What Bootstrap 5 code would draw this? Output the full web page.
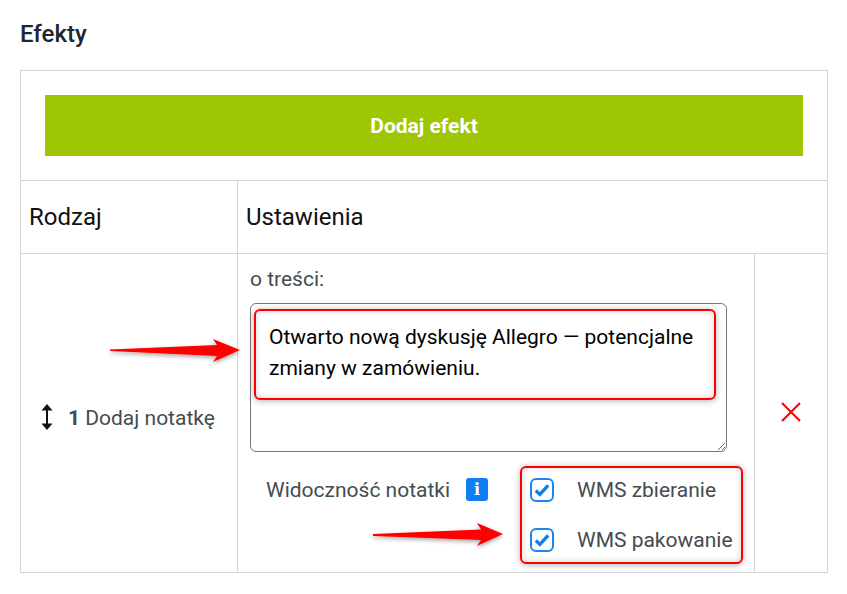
<!DOCTYPE html>
<html lang="pl">
<head>
  <meta charset="UTF-8" />
  <title>Efekty</title>
  <link href="https://cdn.jsdelivr.net/npm/bootstrap@5.3.0/dist/css/bootstrap.min.css" rel="stylesheet" />
  <style>
    body { font-family: Roboto, "Liberation Sans", sans-serif; background: #fff; color: #454b50; }
    .page-wrap { position: relative; width: 847px; height: 594px; padding: 20px; overflow: hidden; }
    .fx-title { font-size: 24px; font-weight: 500; line-height: 28px; margin: 0 0 22px; color: #1d2731; }
    .fx-table { width: 807px; table-layout: fixed; border-collapse: collapse; margin: 0; }
    .fx-table td, .fx-table th { border: 1px solid #d5d5d5; padding: 0; }
    .add-cell { height: 110px; padding: 24px !important; }
    .btn-add { display: block; width: 100%; height: 61px; padding-top: 8px; background: #9fc603; color: #fff; border: 0; border-radius: 0; font-size: 21px; font-weight: 700; }
    .btn-add:hover { background: #9fc603; color: #fff; }
    .head-cell { height: 73px; font-size: 24px; font-weight: 400; color: #111; padding-left: 8px !important; vertical-align: middle; }
    .name-cell { font-size: 21px; vertical-align: middle; }
    .name-inner { padding: 12px 0 0 15px; gap: 10px; }
    .sort-icon { margin-top: -5px; }
    .settings-cell { height: 319px; padding: 12px 27px 0 12px !important; vertical-align: top; }
    .field-label { font-size: 21px; line-height: 26px; margin-bottom: 11px; }
    .note-area { display: block; width: 477px; height: 149px; border: 1px solid #777; border-radius: 6px; padding: 18px 18px; font-size: 21px; line-height: 31px; color: #000; box-shadow: none; }
    .note-area:focus { border-color: #777; box-shadow: none; }
    .vis-row { padding: 26px 0 0 16px; font-size: 21px; }
    .vis-row > * { flex: none; }
    .vis-label { width: 200px; line-height: 24px; white-space: nowrap; }
    .info-badge { width: 22px; height: 23px; border-radius: 3px; background: #0d7ff0; color: #fff; font: 700 16px/23px "DejaVu Serif", serif; text-align: center; }
    .vis-options { margin-left: 42px; gap: 26px; }
    .vis-option { height: 24px; line-height: 24px; white-space: nowrap; gap: 23px; }
    .vis-option .form-check-input { width: 24px; height: 24px; margin: 0; border: 2px solid #1a86f0; border-radius: 6px; background-color: #fff; background-size: 18px; background-image: url("data:image/svg+xml,%3Csvg xmlns='http://www.w3.org/2000/svg' viewBox='0 0 16 16'%3E%3Cpath fill='none' stroke='%230d7ff0' stroke-width='3' d='M2.500 8.500l3.600 3.400 7.400-8'/%3E%3C/svg%3E"); }
    .del-cell { text-align: center; vertical-align: middle; }
    .del-cell svg { display: block; margin: -3px auto 0; }
    .red-box { position: absolute; border: 2px solid #f00; border-radius: 6px; box-shadow: 0 1px 6px rgba(0,0,0,.3), inset 0 0 6px rgba(0,0,0,.18); pointer-events: none; }
    .box-text { left: 254px; top: 309px; width: 462px; height: 91px; }
    .box-checks { left: 520px; top: 466px; width: 223px; height: 98px; }
    .arrow-layer { position: absolute; left: 0; top: 0; pointer-events: none; }
  </style>
</head>
<body>

<div class="page-wrap">
  <h2 class="fx-title">Efekty</h2>

  <table class="fx-table">
    <colgroup>
      <col style="width: 217px" />
      <col style="width: 517px" />
      <col style="width: 73px" />
    </colgroup>
    <tr>
      <td colspan="3" class="add-cell"><button type="button" class="btn btn-add">Dodaj efekt</button></td>
    </tr>
    <tr>
      <th class="head-cell">Rodzaj</th>
      <th class="head-cell" colspan="2">Ustawienia</th>
    </tr>
    <tr>
      <td class="name-cell">
        <div class="name-inner d-flex align-items-center">
          <svg class="sort-icon" width="22" height="28" viewBox="0 0 22 28">
            <path d="M11 3v22" stroke="#111" stroke-width="2" />
            <path d="M11 1l5.500 6.500h-11zM11 27l-5.500-6.500h11z" fill="#111" />
          </svg>
          <span><b>1</b> Dodaj notatkę</span>
        </div>
      </td>
      <td class="settings-cell">
        <div class="field-label">o treści:</div>
        <textarea class="form-control note-area" rows="3">Otwarto nową dyskusję Allegro — potencjalne zmiany w zamówieniu.</textarea>
        <div class="vis-row d-flex align-items-start">
          <div class="vis-label">Widoczność notatki</div>
          <div class="info-badge">i</div>
          <div class="vis-options d-flex flex-column">
            <label class="vis-option d-flex align-items-center"><input class="form-check-input" type="checkbox" checked /><span>WMS zbieranie</span></label>
            <label class="vis-option d-flex align-items-center"><input class="form-check-input" type="checkbox" checked /><span>WMS pakowanie</span></label>
          </div>
        </div>
      </td>
      <td class="del-cell">
        <svg width="20" height="20" viewBox="0 0 20 20"><path d="M1 1l18 18M19 1L1 19" stroke="#f00" stroke-width="2" fill="none" /></svg>
      </td>
    </tr>
  </table>

  <!-- annotations on top of the screenshot -->
  <div class="red-box box-text"></div>
  <div class="red-box box-checks"></div>
  <svg class="arrow-layer" width="847" height="594" viewBox="0 0 847 594">
    <defs>
      <filter id="arrowShadow" x="-10%" y="-50%" width="120%" height="220%">
        <feDropShadow dx="0" dy="2" stdDeviation="2" flood-color="#000" flood-opacity=".35" />
      </filter>
    </defs>
    <path filter="url(#arrowShadow)" fill="#f00" d="M110 349.500L217 345 213 339 240 350 213 362 217 356 110 351z" />
    <path filter="url(#arrowShadow)" fill="#f00" d="M373 534L481 529.500 477 523 503 534 477 546 481 540 373 536z" />
  </svg>
</div>

<script src="https://cdn.jsdelivr.net/npm/bootstrap@5.3.0/dist/js/bootstrap.bundle.min.js"></script>
</body>
</html>
